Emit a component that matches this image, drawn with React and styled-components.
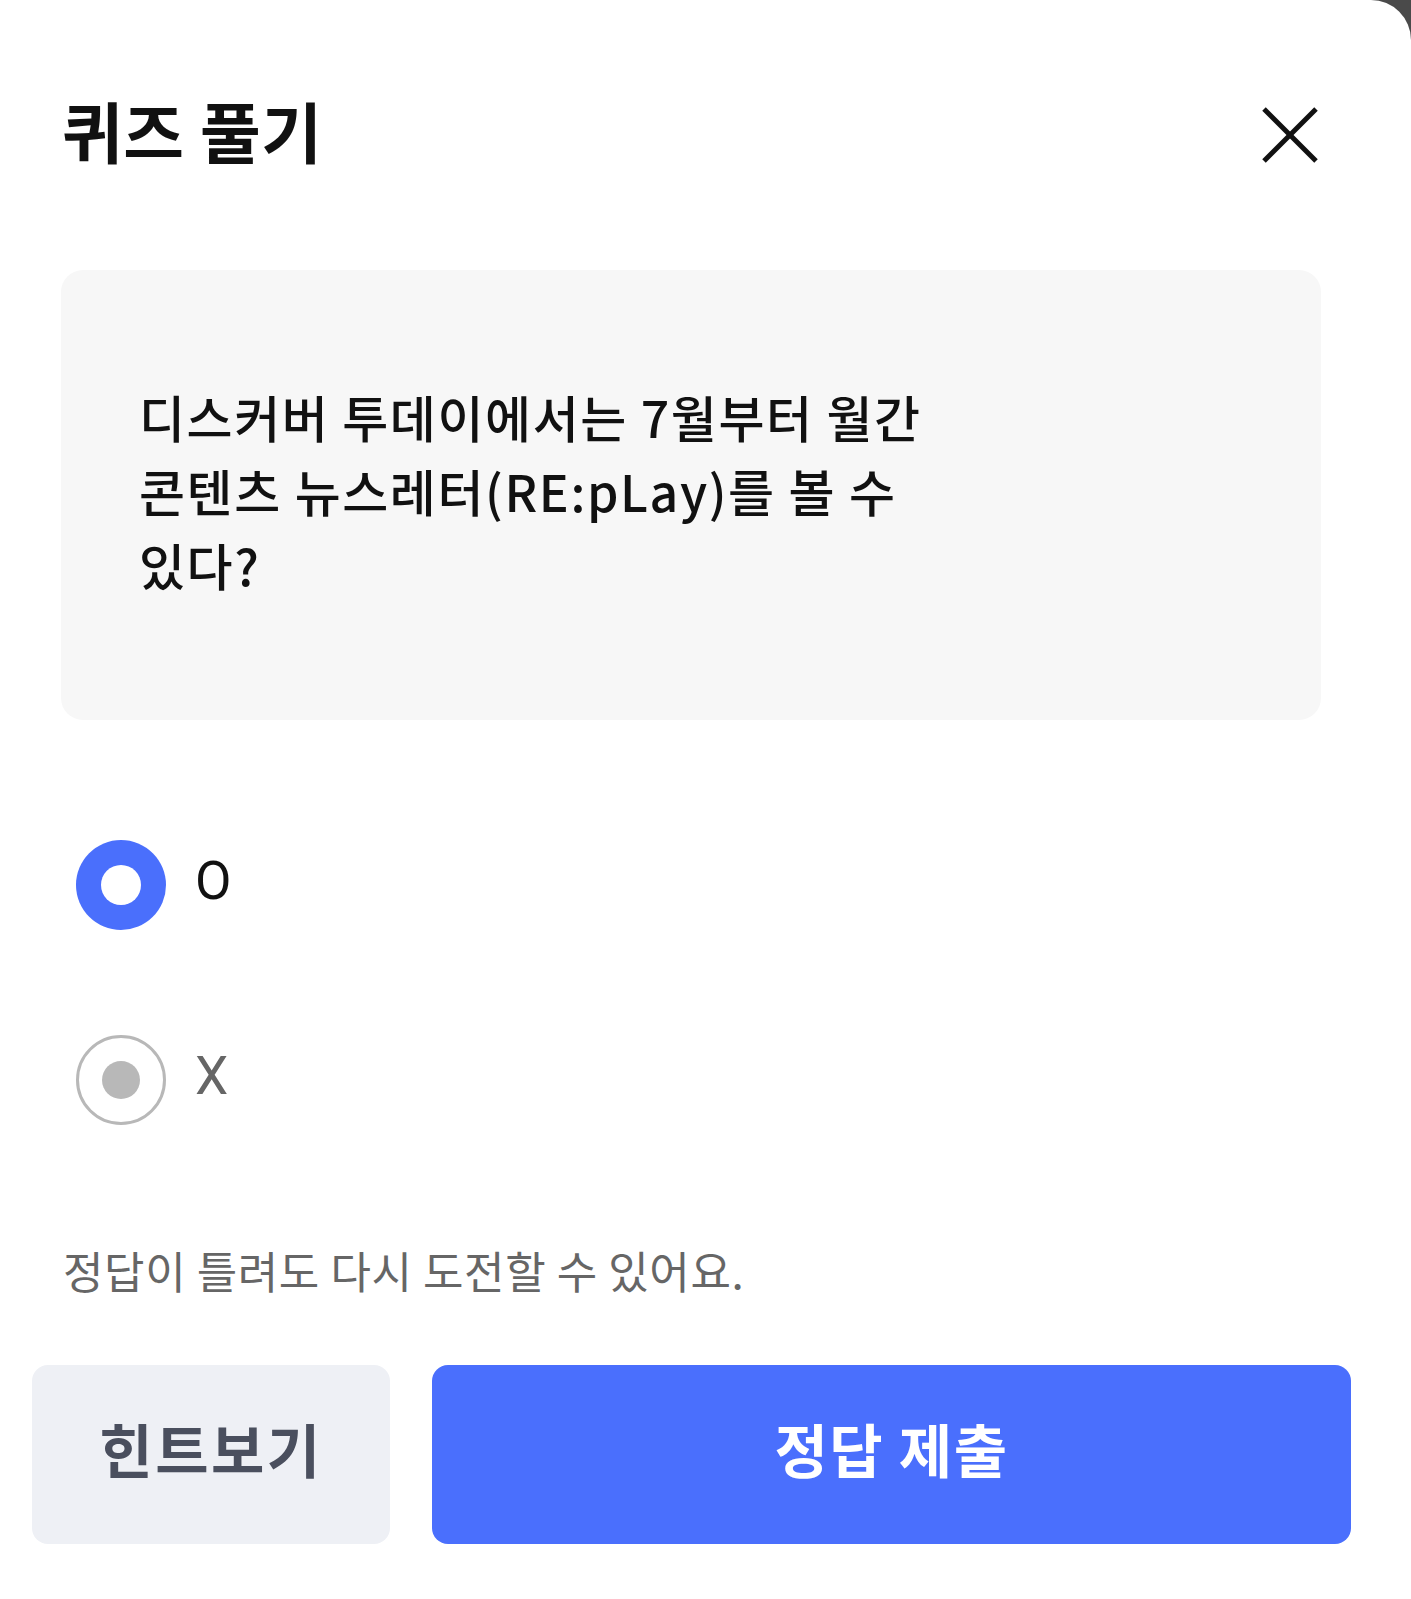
import React, { useState } from "react";
import styled, { createGlobalStyle } from "styled-components";

const GlobalStyle = createGlobalStyle`
  html, body {
    margin: 0;
    padding: 0;
    background: #4a4a4a;
  }
  body {
    font-family: "Noto Sans CJK KR", "Noto Sans", sans-serif;
  }
  * { box-sizing: border-box; }
`;

const Sheet = styled.div`
  width: 1411px;
  min-height: 1599px;
  background: #ffffff;
  border-top-right-radius: 40px;
  display: flex;
  flex-direction: column;
`;

const Header = styled.header`
  display: flex;
  align-items: flex-start;
  justify-content: space-between;
  padding: 91px 91px 0 62px;
`;

const Title = styled.h1`
  margin: 0;
  font-size: 66px;
  line-height: 76px;
  font-weight: 700;
  letter-spacing: 0.5px;
  color: #111111;
`;

const CloseButton = styled.button`
  margin-top: 14px;
  width: 60px;
  height: 60px;
  padding: 0;
  border: none;
  background: transparent;
  display: flex;
  cursor: pointer;
`;

const Body = styled.main`
  padding: 0 90px 0 61px;
  display: flex;
  flex-direction: column;
`;

const QuestionCard = styled.section`
  margin-top: 103px;
  height: 450px;
  background: #f7f7f7;
  border-radius: 22px;
  padding: 109px 78px 0 78px;
`;

const QuestionText = styled.p`
  margin: 0;
  max-width: 900px;
  font-size: 50px;
  line-height: 74px;
  font-weight: 500;
  letter-spacing: 1.6px;
  color: #111111;
`;

const OptionList = styled.div`
  margin-top: 120px;
  display: flex;
  flex-direction: column;
  gap: 105px;
  padding-left: 15px;
`;

const OptionRow = styled.label`
  display: flex;
  align-items: center;
  gap: 29px;
  height: 90px;
  cursor: pointer;
`;

const RadioCircle = styled.span`
  width: 90px;
  height: 90px;
  border-radius: 50%;
  flex-shrink: 0;
  display: flex;
  align-items: center;
  justify-content: center;
  background: ${(p) => (p.$checked ? "#4a6ffc" : "#ffffff")};
  border: ${(p) => (p.$checked ? "none" : "3px solid #b8b8b8")};
`;

const RadioDot = styled.span`
  width: ${(p) => (p.$checked ? 40 : 38)}px;
  height: ${(p) => (p.$checked ? 40 : 38)}px;
  border-radius: 50%;
  background: ${(p) => (p.$checked ? "#ffffff" : "#b8b8b8")};
`;

const OptionLabel = styled.span`
  font-family: Roboto, "Noto Sans", sans-serif;
  font-size: 53px;
  line-height: 1;
  margin-bottom: 8px;
  color: ${(p) => (p.$checked ? "#111111" : "#666666")};
`;

const HintNote = styled.p`
  margin: 119px 0 0 2px;
  font-size: 44px;
  line-height: 52.8px;
  letter-spacing: 0.6px;
  color: #666666;
`;

const Footer = styled.footer`
  display: flex;
  gap: 42px;
  padding: 68px 60px 0 32px;
`;

const ActionButton = styled.button`
  height: 179px;
  border: none;
  border-radius: 16px;
  padding: 0 0 12px 0;
  font-family: "Noto Sans CJK KR", "Noto Sans", sans-serif;
  font-size: 58px;
  font-weight: 700;
  letter-spacing: ${(p) => (p.$primary ? "1.5px" : "2.5px")};
  line-height: 1;
  display: flex;
  align-items: center;
  justify-content: center;
  cursor: pointer;
  width: ${(p) => (p.$primary ? "919px" : "358px")};
  background: ${(p) => (p.$primary ? "#4a6ffd" : "#eef0f5")};
  color: ${(p) => (p.$primary ? "#ffffff" : "#4a4f5e")};
`;

const CloseIcon = () => (
  <svg width="60" height="60" viewBox="0 0 60 60" fill="none">
    <line x1="4" y1="4" x2="56" y2="56" stroke="#111" strokeWidth="5" />
    <line x1="56" y1="4" x2="4" y2="56" stroke="#111" strokeWidth="5" />
  </svg>
);

const options = ["O", "X"];

export default function App() {
  const [selected, setSelected] = useState("O");
  return (
    <>
      <GlobalStyle />
      <Sheet>
        <Header>
          <Title>퀴즈 풀기</Title>
          <CloseButton aria-label="닫기">
            <CloseIcon />
          </CloseButton>
        </Header>
        <Body>
          <QuestionCard>
            <QuestionText>
              디스커버 투데이에서는 7월부터 월간
              <br />
              콘텐츠 뉴스레터(RE:pLay)를 볼 수
              <br />
              있다?
            </QuestionText>
          </QuestionCard>
          <OptionList>
            {options.map((o) => (
              <OptionRow key={o} onClick={() => setSelected(o)}>
                <RadioCircle $checked={selected === o}>
                  <RadioDot $checked={selected === o} />
                </RadioCircle>
                <OptionLabel $checked={selected === o}>{o}</OptionLabel>
              </OptionRow>
            ))}
          </OptionList>
          <HintNote>정답이 틀려도 다시 도전할 수 있어요.</HintNote>
        </Body>
        <Footer>
          <ActionButton>힌트보기</ActionButton>
          <ActionButton $primary>정답 제출</ActionButton>
        </Footer>
      </Sheet>
    </>
  );
}
